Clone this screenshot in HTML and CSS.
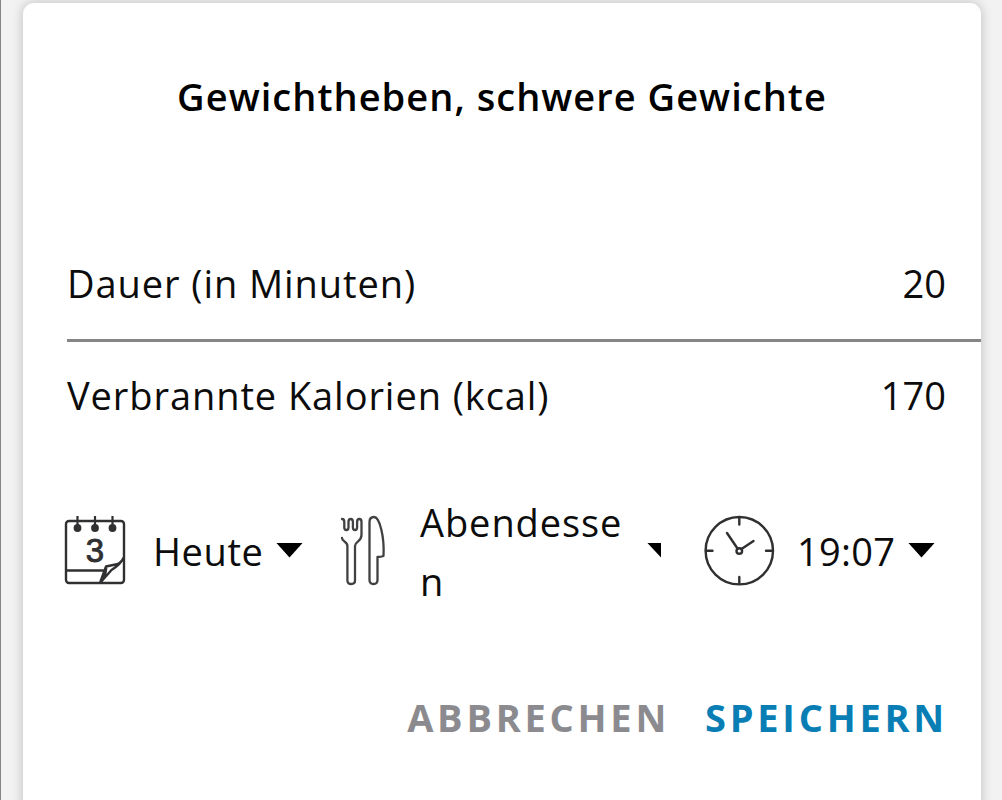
FILE: index.html
```html
<!DOCTYPE html>
<html lang="de">
<head>
    <meta charset="UTF-8">
    <meta name="viewport" content="width=device-width, initial-scale=1.0">
    <title>Gewichtheben, schwere Gewichte</title>
    <link rel="stylesheet" href="styles.css">
</head>
<body>

    <div class="card">
        <h1>Gewichtheben, schwere Gewichte</h1>

        <div class="row row-dauer">
            <span>Dauer (in Minuten)</span>
            <span class="value">20</span>
        </div>
        <div class="row row-kalorien">
            <span>Verbrannte Kalorien (kcal)</span>
            <span class="value">170</span>
        </div>

        <div class="auswahl">
            <div class="feld tag">
                <svg class="icon" width="64" height="74" viewBox="0 0 64 74" fill="none" stroke="#303032" stroke-width="2.4" stroke-linejoin="round">
                    <path d="M60 44V10a3 3 0 0 0-3-3H5a3 3 0 0 0-3 3v56a3 3 0 0 0 3 3h52a3 3 0 0 0 3-3V43Q57 50 51.500 50.500L42 52.500L40 58L36 69L47.500 56Q57 50 60 43M2 56.500H40M42 52.500Q43 58 38 66"/>
                    <path d="M13.500 2V14M31 2V14M48.500 2V14" stroke-width="2.2"/>
                    <g fill="#303032" stroke="none">
                        <circle cx="13.500" cy="14" r="3.900"/>
                        <circle cx="31" cy="14" r="3.900"/>
                        <circle cx="48.500" cy="14" r="3.900"/>
                    </g>
                    <text x="31" y="48" text-anchor="middle">3</text>
                </svg>
                <span class="text">Heute</span>
                <span class="pfeil"></span>
            </div>

            <div class="feld mahlzeit">
                <svg class="icon" width="48" height="74" viewBox="0 0 48 74" fill="none" stroke="#414143" stroke-width="2.3" stroke-linecap="round" stroke-linejoin="round">
                    <path d="M2 5Q4.300 5 4.300 8V13.500Q4.300 16 6.400 16T8.500 13.500V8Q8.500 5 10.700 5T12.900 8V13.500Q12.900 16 15 16T17.100 13.500V8Q17.100 5 19.300 5T21.500 8V21C21.500 28 15 27 15 32V66.500Q15 70 11.200 70T7.400 66.500V32C7.400 27 2 28 2 24"/>
                    <path d="M29.500 8Q29.500 3 34 3C40 3 44.500 24 43.500 42Q41 43 37.500 43V66Q37.500 70 33.500 70T29.500 66Z"/>
                </svg>
                <span class="text">Abendessen</span>
                <span class="pfeil pfeil-halb"></span>
            </div>

            <div class="feld zeit">
                <svg class="icon" width="72" height="74" viewBox="0 0 72 74" fill="none" stroke="#303032" stroke-width="2.4" stroke-linecap="round">
                    <circle cx="36.300" cy="36.700" r="33.700"/>
                    <path d="M36.300 4V10.500M36.300 63V69M3 36.700H9.500M63 36.700H69M24 19L34.500 34.500M50.500 27L38.500 35"/>
                    <circle cx="36.300" cy="37" r="2.800"/>
                </svg>
                <span class="text">19:07</span>
                <span class="pfeil"></span>
            </div>
        </div>

        <div class="buttons">
            <button type="button" class="abbrechen">ABBRECHEN</button>
            <button type="button" class="speichern">SPEICHERN</button>
        </div>
    </div>

</body>
</html>
```
FILE: styles.css
```css
* {
    box-sizing: border-box;
}
body {
    font-family: "Open Sans", "Noto Sans", sans-serif;
    font-size: 38px;
    line-height: 60px;
    letter-spacing: 0.92px;
    color: #0c0c0c;
    margin: 0;
    padding: 3px 21px 0 22px;
    height: 800px;
    overflow: hidden;
    background-color: #f2f2f2;
    border-left: 1px solid #858585;
}
.card {
    height: 820px;
    padding-top: 63px;
    background-color: #fff;
    border-radius: 11px;
    box-shadow: 0 0 12px rgba(0, 0, 0, 0.22);
}
h1 {
    margin: 0 0 127px;
    font-size: 38px;
    font-weight: 600;
    text-align: center;
    letter-spacing: 1.04px;
    color: #000;
}
.row {
    display: flex;
    justify-content: space-between;
    margin-left: 44px;
    padding-right: 35px;
}
.row-dauer {
    height: 89px;
    border-bottom: 3px solid #858585;
}
.row-kalorien {
    height: 60px;
    margin-top: 23px;
}
.value {
    letter-spacing: 0;
}
.auswahl {
    display: flex;
    align-items: center;
    height: 118px;
    margin-top: 67px;
    padding-left: 41px;
}
.feld {
    display: flex;
    align-items: center;
}
.icon {
    flex: none;
}
.icon text {
    font-family: "Liberation Sans", Arial, sans-serif;
    font-size: 33px;
    letter-spacing: 0;
    fill: #303032;
    stroke: #303032;
    stroke-width: 0.9px;
}
.tag {
    width: 276px;
}
.tag .text {
    width: 123px;
    margin-left: 25px;
    letter-spacing: 0.6px;
}
.mahlzeit {
    width: 363px;
}
.mahlzeit .text {
    width: 216px;
    margin-left: 32px;
    padding-top: 1px;
    line-height: 59px;
    word-break: break-all;
}
.zeit .text {
    width: 111px;
    margin-left: 22px;
    letter-spacing: 0.3px;
}
.pfeil {
    width: 27px;
    height: 15px;
    margin-bottom: 2px;
    background-color: #000;
    clip-path: polygon(0 0, 100% 0, 50% 100%);
}
.pfeil-halb {
    width: 14px;
    margin-left: 11px;
    clip-path: polygon(0 0, 100% 0, 100% 100%);
}
.buttons {
    display: flex;
    justify-content: flex-end;
    gap: 35px;
    margin-top: 77px;
    padding-right: 33px;
}
.buttons button {
    padding: 0;
    border: none;
    background: none;
    font-family: inherit;
    font-size: 38px;
    font-weight: 700;
    line-height: 60px;
    letter-spacing: 3.75px;
    cursor: pointer;
}
.abbrechen {
    color: #8b8b8f;
}
.speichern {
    color: #087eb5;
}
```
